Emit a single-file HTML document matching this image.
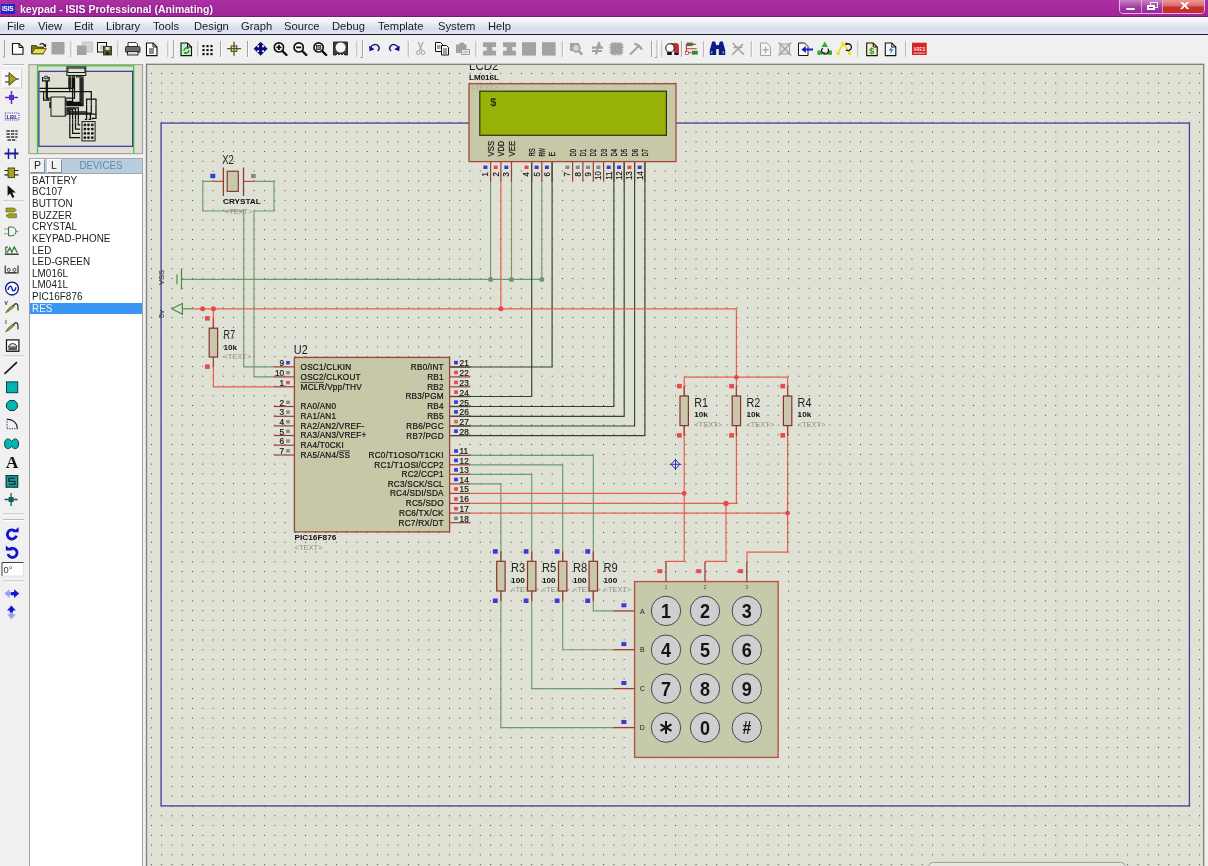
<!DOCTYPE html>
<html lang="en"><head><meta charset="utf-8"><title>keypad - ISIS Professional (Animating)</title>
<style>
html,body{margin:0;padding:0}
body{width:1208px;height:866px;overflow:hidden;position:relative;background:#f0f0f0;font-family:"Liberation Sans",sans-serif;color:#1a1a1a}
#title{position:absolute;left:0;top:0;width:1208px;height:16.4px;background:linear-gradient(#aa2fa3,#a0269a);border-bottom:1px solid #702070;box-sizing:content-box}
#title .ico{position:absolute;left:.5px;top:4px;width:14.5px;height:9.5px;background:#2424c0;color:#fff;font-size:6.5px;font-weight:bold;line-height:9.5px;text-align:center;letter-spacing:-.2px}
#title .cap{position:absolute;left:20px;top:2.5px;font-size:10px;line-height:14px;font-weight:bold;color:#fbf4fb;white-space:nowrap;transform:scaleX(1.052);transform-origin:0 0;text-shadow:0 0 2px rgba(90,10,90,.8)}
#wb{position:absolute;left:1118.5px;top:-1px;width:86px;height:14.5px;border:1px solid rgba(255,225,255,.75);border-radius:0 0 4px 4px;box-sizing:border-box;overflow:hidden;display:flex}
#wb span{display:block;height:100%;position:relative;border-right:1px solid rgba(255,225,255,.55);box-sizing:border-box}
#wb .mn{width:23px;background:linear-gradient(#c684c6,#a23aa2 55%,#9a2a9a)}
#wb .mx{width:22px;background:linear-gradient(#c684c6,#a23aa2 55%,#9a2a9a)}
#wb .cl{width:41px;background:linear-gradient(#e89a98,#dc6a68 45%,#c8302a 55%,#c23028);border-right:0}
#wb .mn i{position:absolute;left:6px;top:7.5px;width:9px;height:2.4px;background:#fff;border-radius:1px}
#wb .mx i{position:absolute;left:5.5px;top:4.6px;width:7.6px;height:5.6px;border:2px solid #fff;box-sizing:border-box;background:#6a2a78}
#wb .mx b{position:absolute;left:8.2px;top:2.2px;width:7.6px;height:5.6px;border:1.6px solid #f4e4f4;box-sizing:border-box}
#wb .cl i{position:absolute;left:16.6px;top:-1.9px;font-style:normal;font-weight:bold;font-size:13.5px;line-height:14px;color:#fff;transform:scaleX(1.25);transform-origin:0 0}
#menu{position:absolute;left:0;top:17.4px;width:1208px;height:17.1px;background:linear-gradient(#fdfbfe 0,#f0f1f9 30%,#d9dff0 62%,#d8def0 80%,#e2e7f5 100%);border-bottom:1.7px solid #181820;box-sizing:content-box}
#menu span{position:absolute;top:2.6px;font-size:10.4px;line-height:14px;color:#1c1c1c;white-space:nowrap;letter-spacing:0;transform:scaleX(1.077);transform-origin:0 0}
#hdr{position:absolute;left:28.5px;top:157.8px;width:114px;height:16.4px;background:#b9cddf;border:1px solid #a4a8ac;box-sizing:border-box;overflow:hidden}
#hdr .b{position:absolute;top:0;height:14.4px;width:15px;background:#f2f2f2;border:1px solid #fff;border-right-color:#8c8c8c;border-bottom-color:#8c8c8c;box-sizing:border-box;font-size:10.5px;line-height:11.5px;text-align:center;color:#222}
#hdr .t{position:absolute;left:30.6px;top:.3px;width:80px;text-align:center;font-size:10.3px;line-height:14px;color:#6288aa;letter-spacing:.1px;transform:scaleX(.94)}
#list{position:absolute;left:28.5px;top:174px;width:114px;height:700px;background:#fff;border:1px solid #a0a0a0;border-top:0;box-sizing:border-box;margin:0;padding:.8px 0 0 0;list-style:none}
#list li{height:11.63px;line-height:11.63px;font-size:10.4px;padding-left:2.1px;white-space:nowrap;color:#1c1c1c;letter-spacing:.05px;transform-origin:0 0}
#list li.sel{background:#3a96f4;color:#eef4ff}
#list li span{display:inline-block;transform:scaleX(.953);transform-origin:0 50%}
svg{position:absolute;left:0;top:0;will-change:transform}
#title,#menu,#hdr,#list{will-change:transform}
svg text{font-family:"Liberation Sans",sans-serif}
</style></head><body>
<div id="title"><div class="ico">ISIS</div><div class="cap">keypad - ISIS Professional (Animating)</div>
<div id="wb"><span class="mn"><i></i></span><span class="mx"><b></b><i></i></span><span class="cl"><i>x</i></span></div></div>
<div id="menu">
<span style="left:7.0px">File</span>
<span style="left:37.5px">View</span>
<span style="left:74.0px">Edit</span>
<span style="left:105.5px">Library</span>
<span style="left:153.0px">Tools</span>
<span style="left:194.0px">Design</span>
<span style="left:241.0px">Graph</span>
<span style="left:284.0px">Source</span>
<span style="left:331.5px">Debug</span>
<span style="left:377.5px">Template</span>
<span style="left:437.5px">System</span>
<span style="left:487.5px">Help</span>
</div>
<div id="hdr"><div class="b" style="left:0">P</div><div class="b" style="left:16.5px">L</div><div class="t">DEVICES</div></div>
<ul id="list">
<li><span>BATTERY</span></li>
<li><span>BC107</span></li>
<li><span>BUTTON</span></li>
<li><span>BUZZER</span></li>
<li><span>CRYSTAL</span></li>
<li><span>KEYPAD-PHONE</span></li>
<li><span>LED</span></li>
<li><span>LED-GREEN</span></li>
<li><span>LM016L</span></li>
<li><span>LM041L</span></li>
<li><span>PIC16F876</span></li>
<li class="sel"><span>RES</span></li>
</ul>
<svg width="1208" height="866" viewBox="0 0 1208 866">
<defs><pattern id="grid" x="7.022" y="4.524" width="10.277" height="9.768" patternUnits="userSpaceOnUse"><rect x="0" y="0" width="1" height="1" fill="#2c2c26" fill-opacity=".88"/></pattern>
<clipPath id="cv"><rect x="148" y="65" width="1055.5" height="801"/></clipPath></defs>
<rect x="146.5" y="64.3" width="1057.2" height="810" fill="#e0e1d5" stroke="#7e7e7a" stroke-width="1.3"/>
<g clip-path="url(#cv)">
<rect x="150" y="68" width="1052" height="798" fill="url(#grid)"/>
<rect x="162.3" y="124.3" width="1025.9" height="680.4" fill="none" stroke="#e4e4f0" stroke-width="1.2"/>
<rect x="161.1" y="123.1" width="1028.3" height="682.8" fill="none" stroke="#464692" stroke-width="1.35"/>
<rect x="928.5" y="862.4" width="197" height="12" rx="5" fill="#e6e7dc" stroke="#9c9c98" stroke-width="1"/>
<path d="M181.5,279.4 L541.8,279.4" fill="none" stroke="#6f9a6c" stroke-width="1.15"/>
<path d="M490.6,181.4 L490.6,279.4" fill="none" stroke="#6f9a6c" stroke-width="1.15"/>
<path d="M511.5,181.4 L511.5,279.4" fill="none" stroke="#6f9a6c" stroke-width="1.15"/>
<path d="M541.8,181.4 L541.8,279.4" fill="none" stroke="#6f9a6c" stroke-width="1.15"/>
<path d="M500.9,181.4 L500.9,308.8" fill="none" stroke="#e8604c" stroke-width="1.2"/>
<path d="M552.1,181.4 L552.1,367.0 L470.0,367.0" fill="none" stroke="#2c4a30" stroke-width="1.15"/>
<path d="M531.7,181.4 L531.7,396.5 L470.0,396.5" fill="none" stroke="#2c4a30" stroke-width="1.15"/>
<path d="M613.9,181.4 L613.9,406.5 L470.0,406.5" fill="none" stroke="#2c4a30" stroke-width="1.15"/>
<path d="M624.2,181.4 L624.2,416.3 L470.0,416.3" fill="none" stroke="#2c4a30" stroke-width="1.15"/>
<path d="M634.6,181.4 L634.6,426.0 L470.0,426.0" fill="none" stroke="#2c4a30" stroke-width="1.15"/>
<path d="M644.9,181.4 L644.9,435.6 L470.0,435.6" fill="none" stroke="#2c4a30" stroke-width="1.15"/>
<path d="M182.4,308.8 L192.7,308.8" fill="none" stroke="#3f8f46" stroke-width="1.15"/>
<path d="M192.7,308.8 L736.4,308.8 L736.4,377.2" fill="none" stroke="#e8604c" stroke-width="1.2"/>
<path d="M684.2,396.0 L684.2,377.2 L787.6,377.2 L787.6,396.0" fill="none" stroke="#e8604c" stroke-width="1.2"/>
<path d="M736.4,377.2 L736.4,396.0" fill="none" stroke="#e8604c" stroke-width="1.2"/>
<path d="M213.4,308.8 L213.4,328.2" fill="none" stroke="#e8604c" stroke-width="1.2"/>
<path d="M213.4,357.0 L213.4,386.8 L273.8,386.8" fill="none" stroke="#e8604c" stroke-width="1.2"/>
<path d="M212.8,181.4 L202.8,181.4 L202.8,211.0 L243.7,211.0 L243.7,366.9 L273.8,366.9" fill="none" stroke="#6f9a6c" stroke-width="1.15"/>
<path d="M254.3,181.4 L274.0,181.4 L274.0,211.0 L254.0,211.0 L254.0,376.9 L273.8,376.9" fill="none" stroke="#6f9a6c" stroke-width="1.15"/>
<path d="M470.0,455.4 L593.3,455.4 L593.3,561.3" fill="none" stroke="#6f9a6c" stroke-width="1.15"/>
<path d="M593.3,591.0 L593.3,610.9 L613.5,610.9" fill="none" stroke="#6f9a6c" stroke-width="1.15"/>
<path d="M470.0,464.8 L562.7,464.8 L562.7,561.3" fill="none" stroke="#6f9a6c" stroke-width="1.15"/>
<path d="M562.7,591.0 L562.7,649.7 L613.5,649.7" fill="none" stroke="#6f9a6c" stroke-width="1.15"/>
<path d="M470.0,474.3 L531.7,474.3 L531.7,561.3" fill="none" stroke="#6f9a6c" stroke-width="1.15"/>
<path d="M531.7,591.0 L531.7,688.6 L613.5,688.6" fill="none" stroke="#6f9a6c" stroke-width="1.15"/>
<path d="M470.0,483.9 L500.9,483.9 L500.9,561.3" fill="none" stroke="#6f9a6c" stroke-width="1.15"/>
<path d="M500.9,591.0 L500.9,727.6 L613.5,727.6" fill="none" stroke="#6f9a6c" stroke-width="1.15"/>
<path d="M470.0,493.4 L684.2,493.4" fill="none" stroke="#e8604c" stroke-width="1.2"/>
<path d="M470.0,503.4 L736.4,503.4 L736.4,425.6" fill="none" stroke="#e8604c" stroke-width="1.2"/>
<path d="M470.0,513.1 L787.6,513.1" fill="none" stroke="#e8604c" stroke-width="1.2"/>
<path d="M684.2,425.6 L684.2,561.4 L666.2,561.4" fill="none" stroke="#e8604c" stroke-width="1.2"/>
<path d="M726.0,503.4 L726.0,561.4 L705.2,561.4" fill="none" stroke="#e8604c" stroke-width="1.2"/>
<path d="M787.6,425.6 L787.6,552.2 L747.0,552.2 L747.0,561.4" fill="none" stroke="#e8604c" stroke-width="1.2"/>
<text x="469.0" y="69.8" font-size="12.5" fill="#222" text-anchor="start" font-weight="normal" letter-spacing="0"  textLength="29.5" lengthAdjust="spacingAndGlyphs">LCD2</text>
<text x="469.0" y="80.4" font-size="7.2" fill="#111" text-anchor="start" font-weight="bold" letter-spacing="0"  textLength="30.0" lengthAdjust="spacingAndGlyphs">LM016L</text>
<rect x="469" y="83.7" width="207" height="77.9" fill="#c6c8a8" stroke="#a8463c" stroke-width="1.3"/>
<text x="470.5" y="89.6" font-size="7.5" fill="#a9aa98" text-anchor="start" font-weight="normal" letter-spacing="0" >&lt;TEXT&gt;</text>
<rect x="479.8" y="91.2" width="186.6" height="44.1" fill="#99b209" stroke="#2c3208" stroke-width="1.2"/>
<text x="490.3" y="105.8" font-size="11" fill="#2a3010" text-anchor="start" font-weight="bold" letter-spacing="0" >$</text>
<text transform="translate(494.1,156.5) rotate(-90)" font-size="9.8" fill="#1a1a1a" stroke="#1a1a1a" stroke-width=".25" textLength="15.6" lengthAdjust="spacingAndGlyphs">VSS</text>
<path d="M490.6,161.6V181.4" stroke="#96403a" stroke-width="1.2"/>
<rect x="483.4" y="165.6" width="4.0" height="3.4" fill="#3a3ad8"/>
<text transform="translate(488.3,176.4) rotate(-90)" font-size="9.2" fill="#151515" stroke="#151515" stroke-width=".2" textLength="4.3" lengthAdjust="spacingAndGlyphs">1</text>
<text transform="translate(504.4,156.5) rotate(-90)" font-size="9.8" fill="#1a1a1a" stroke="#1a1a1a" stroke-width=".25" textLength="15.6" lengthAdjust="spacingAndGlyphs">VDD</text>
<path d="M500.9,161.6V181.4" stroke="#96403a" stroke-width="1.2"/>
<rect x="493.7" y="165.6" width="4.0" height="3.4" fill="#e84a50"/>
<text transform="translate(498.6,176.4) rotate(-90)" font-size="9.2" fill="#151515" stroke="#151515" stroke-width=".2" textLength="4.3" lengthAdjust="spacingAndGlyphs">2</text>
<text transform="translate(515.0,156.5) rotate(-90)" font-size="9.8" fill="#1a1a1a" stroke="#1a1a1a" stroke-width=".25" textLength="15.6" lengthAdjust="spacingAndGlyphs">VEE</text>
<path d="M511.5,161.6V181.4" stroke="#96403a" stroke-width="1.2"/>
<rect x="504.3" y="165.6" width="4.0" height="3.4" fill="#3a3ad8"/>
<text transform="translate(509.2,176.4) rotate(-90)" font-size="9.2" fill="#151515" stroke="#151515" stroke-width=".2" textLength="4.3" lengthAdjust="spacingAndGlyphs">3</text>
<text transform="translate(534.9,156.5) rotate(-90)" font-size="9" fill="#1a1a1a" stroke="#1a1a1a" stroke-width=".25" textLength="8.4" lengthAdjust="spacingAndGlyphs">RS</text>
<path d="M531.7,161.6V181.4" stroke="#96403a" stroke-width="1.2"/>
<rect x="524.5" y="165.6" width="4.0" height="3.4" fill="#e84a50"/>
<text transform="translate(529.4,176.4) rotate(-90)" font-size="9.2" fill="#151515" stroke="#151515" stroke-width=".2" textLength="4.3" lengthAdjust="spacingAndGlyphs">4</text>
<text transform="translate(545.0,156.5) rotate(-90)" font-size="9" fill="#1a1a1a" stroke="#1a1a1a" stroke-width=".25" textLength="8.4" lengthAdjust="spacingAndGlyphs">RW</text>
<path d="M541.8,161.6V181.4" stroke="#96403a" stroke-width="1.2"/>
<rect x="534.6" y="165.6" width="4.0" height="3.4" fill="#3a3ad8"/>
<text transform="translate(539.5,176.4) rotate(-90)" font-size="9.2" fill="#151515" stroke="#151515" stroke-width=".2" textLength="4.3" lengthAdjust="spacingAndGlyphs">5</text>
<text transform="translate(555.3,156.5) rotate(-90)" font-size="9" fill="#1a1a1a" stroke="#1a1a1a" stroke-width=".25" textLength="4.6" lengthAdjust="spacingAndGlyphs">E</text>
<path d="M552.1,161.6V181.4" stroke="#96403a" stroke-width="1.2"/>
<rect x="544.9" y="165.6" width="4.0" height="3.4" fill="#3a3ad8"/>
<text transform="translate(549.8,176.4) rotate(-90)" font-size="9.2" fill="#151515" stroke="#151515" stroke-width=".2" textLength="4.3" lengthAdjust="spacingAndGlyphs">6</text>
<text transform="translate(575.8,156.5) rotate(-90)" font-size="8.8" fill="#1a1a1a" stroke="#1a1a1a" stroke-width=".25" textLength="7.6" lengthAdjust="spacingAndGlyphs">D0</text>
<path d="M572.6,161.6V181.4" stroke="#96403a" stroke-width="1.2"/>
<rect x="565.4" y="165.6" width="4.0" height="3.4" fill="#8a8a84"/>
<text transform="translate(570.3,176.4) rotate(-90)" font-size="9.2" fill="#151515" stroke="#151515" stroke-width=".2" textLength="4.3" lengthAdjust="spacingAndGlyphs">7</text>
<text transform="translate(586.1,156.5) rotate(-90)" font-size="8.8" fill="#1a1a1a" stroke="#1a1a1a" stroke-width=".25" textLength="7.6" lengthAdjust="spacingAndGlyphs">D1</text>
<path d="M582.9,161.6V181.4" stroke="#96403a" stroke-width="1.2"/>
<rect x="575.7" y="165.6" width="4.0" height="3.4" fill="#8a8a84"/>
<text transform="translate(580.6,176.4) rotate(-90)" font-size="9.2" fill="#151515" stroke="#151515" stroke-width=".2" textLength="4.3" lengthAdjust="spacingAndGlyphs">8</text>
<text transform="translate(596.4,156.5) rotate(-90)" font-size="8.8" fill="#1a1a1a" stroke="#1a1a1a" stroke-width=".25" textLength="7.6" lengthAdjust="spacingAndGlyphs">D2</text>
<path d="M593.3,161.6V181.4" stroke="#96403a" stroke-width="1.2"/>
<rect x="586.1" y="165.6" width="4.0" height="3.4" fill="#8a8a84"/>
<text transform="translate(591.0,176.4) rotate(-90)" font-size="9.2" fill="#151515" stroke="#151515" stroke-width=".2" textLength="4.3" lengthAdjust="spacingAndGlyphs">9</text>
<text transform="translate(606.8,156.5) rotate(-90)" font-size="8.8" fill="#1a1a1a" stroke="#1a1a1a" stroke-width=".25" textLength="7.6" lengthAdjust="spacingAndGlyphs">D3</text>
<path d="M603.6,161.6V181.4" stroke="#96403a" stroke-width="1.2"/>
<rect x="596.4" y="165.6" width="4.0" height="3.4" fill="#8a8a84"/>
<text transform="translate(601.3,179.8) rotate(-90)" font-size="9.2" fill="#151515" stroke="#151515" stroke-width=".2" textLength="8.4" lengthAdjust="spacingAndGlyphs">10</text>
<text transform="translate(617.1,156.5) rotate(-90)" font-size="8.8" fill="#1a1a1a" stroke="#1a1a1a" stroke-width=".25" textLength="7.6" lengthAdjust="spacingAndGlyphs">D4</text>
<path d="M613.9,161.6V181.4" stroke="#96403a" stroke-width="1.2"/>
<rect x="606.7" y="165.6" width="4.0" height="3.4" fill="#3a3ad8"/>
<text transform="translate(611.6,179.8) rotate(-90)" font-size="9.2" fill="#151515" stroke="#151515" stroke-width=".2" textLength="8.4" lengthAdjust="spacingAndGlyphs">11</text>
<text transform="translate(627.4,156.5) rotate(-90)" font-size="8.8" fill="#1a1a1a" stroke="#1a1a1a" stroke-width=".25" textLength="7.6" lengthAdjust="spacingAndGlyphs">D5</text>
<path d="M624.2,161.6V181.4" stroke="#96403a" stroke-width="1.2"/>
<rect x="617.0" y="165.6" width="4.0" height="3.4" fill="#3a3ad8"/>
<text transform="translate(622.0,179.8) rotate(-90)" font-size="9.2" fill="#151515" stroke="#151515" stroke-width=".2" textLength="8.4" lengthAdjust="spacingAndGlyphs">12</text>
<text transform="translate(637.7,156.5) rotate(-90)" font-size="8.8" fill="#1a1a1a" stroke="#1a1a1a" stroke-width=".25" textLength="7.6" lengthAdjust="spacingAndGlyphs">D6</text>
<path d="M634.6,161.6V181.4" stroke="#96403a" stroke-width="1.2"/>
<rect x="627.4" y="165.6" width="4.0" height="3.4" fill="#e84a50"/>
<text transform="translate(632.3,179.8) rotate(-90)" font-size="9.2" fill="#151515" stroke="#151515" stroke-width=".2" textLength="8.4" lengthAdjust="spacingAndGlyphs">13</text>
<text transform="translate(648.1,156.5) rotate(-90)" font-size="8.8" fill="#1a1a1a" stroke="#1a1a1a" stroke-width=".25" textLength="7.6" lengthAdjust="spacingAndGlyphs">D7</text>
<path d="M644.9,161.6V181.4" stroke="#96403a" stroke-width="1.2"/>
<rect x="637.7" y="165.6" width="4.0" height="3.4" fill="#3a3ad8"/>
<text transform="translate(642.6,179.8) rotate(-90)" font-size="9.2" fill="#151515" stroke="#151515" stroke-width=".2" textLength="8.4" lengthAdjust="spacingAndGlyphs">14</text>
<path d="M181.5,269V289.6M177,274.6V284.2" stroke="#4a8a4e" stroke-width="1.2" fill="none"/>
<path d="M171.9,308.8L182.4,303.4V314.2Z" stroke="#3f8f46" stroke-width="1.2" fill="none"/>
<text transform="translate(163.9,285) rotate(-90)" font-size="7.5" fill="#222">VSS</text>
<text transform="translate(163.9,318) rotate(-90)" font-size="7.5" fill="#222">5v</text>
<circle cx="202.6" cy="308.8" r="2.5" fill="#e8484a"/>
<circle cx="213.4" cy="308.8" r="2.5" fill="#e8484a"/>
<circle cx="500.9" cy="308.8" r="2.5" fill="#e8484a"/>
<circle cx="490.6" cy="279.4" r="2.5" fill="#6e976a"/>
<circle cx="511.5" cy="279.4" r="2.5" fill="#6e976a"/>
<circle cx="541.8" cy="279.4" r="2.5" fill="#6e976a"/>
<circle cx="736.4" cy="377.2" r="2.3" fill="#e8484a"/>
<circle cx="684.2" cy="493.4" r="2.4" fill="#e8484a"/>
<circle cx="726.0" cy="503.4" r="2.6" fill="#e8484a"/>
<circle cx="787.6" cy="513.1" r="2.4" fill="#e8484a"/>
<path d="M213.4,318.4V328.2M213.4,357.0V366.8" stroke="#a83c36" stroke-width="1.25"/>
<rect x="209.2" y="328.2" width="8.4" height="28.8" fill="#cbc7ac" stroke="#84362e" stroke-width="1.2"/>
<rect x="205.0" y="316.1" width="4.8" height="4.5" fill="#e84a50"/>
<rect x="205.0" y="364.4" width="4.8" height="4.5" fill="#e84a50"/>
<text x="223.4" y="338.9" font-size="12" fill="#222" text-anchor="start" font-weight="normal" letter-spacing="0"  textLength="11.6" lengthAdjust="spacingAndGlyphs">R7</text>
<text x="223.4" y="349.5" font-size="7.8" fill="#151515" text-anchor="start" font-weight="bold" letter-spacing="0"  textLength="13.7" lengthAdjust="spacingAndGlyphs">10k</text>
<text x="223.4" y="358.8" font-size="7.5" fill="#8f9088" text-anchor="start" font-weight="normal" letter-spacing="0" >&lt;TEXT&gt;</text>
<path d="M684.2,386.2V396.0M684.2,425.6V435.4" stroke="#a83c36" stroke-width="1.25"/>
<rect x="680.0" y="396.0" width="8.4" height="29.6" fill="#cbc7ac" stroke="#84362e" stroke-width="1.2"/>
<rect x="677.0" y="383.9" width="4.8" height="4.5" fill="#e84a50"/>
<rect x="677.0" y="433.1" width="4.8" height="4.5" fill="#e84a50"/>
<text x="694.2" y="406.7" font-size="12" fill="#222" text-anchor="start" font-weight="normal" letter-spacing="0"  textLength="13.8" lengthAdjust="spacingAndGlyphs">R1</text>
<text x="694.2" y="417.3" font-size="7.8" fill="#151515" text-anchor="start" font-weight="bold" letter-spacing="0"  textLength="13.7" lengthAdjust="spacingAndGlyphs">10k</text>
<text x="694.2" y="426.6" font-size="7.5" fill="#8f9088" text-anchor="start" font-weight="normal" letter-spacing="0" >&lt;TEXT&gt;</text>
<path d="M736.4,386.2V396.0M736.4,425.6V435.4" stroke="#a83c36" stroke-width="1.25"/>
<rect x="732.2" y="396.0" width="8.4" height="29.6" fill="#cbc7ac" stroke="#84362e" stroke-width="1.2"/>
<rect x="729.2" y="383.9" width="4.8" height="4.5" fill="#e84a50"/>
<rect x="729.2" y="433.1" width="4.8" height="4.5" fill="#e84a50"/>
<text x="746.4" y="406.7" font-size="12" fill="#222" text-anchor="start" font-weight="normal" letter-spacing="0"  textLength="13.8" lengthAdjust="spacingAndGlyphs">R2</text>
<text x="746.4" y="417.3" font-size="7.8" fill="#151515" text-anchor="start" font-weight="bold" letter-spacing="0"  textLength="13.7" lengthAdjust="spacingAndGlyphs">10k</text>
<text x="746.4" y="426.6" font-size="7.5" fill="#8f9088" text-anchor="start" font-weight="normal" letter-spacing="0" >&lt;TEXT&gt;</text>
<path d="M787.6,386.2V396.0M787.6,425.6V435.4" stroke="#a83c36" stroke-width="1.25"/>
<rect x="783.4" y="396.0" width="8.4" height="29.6" fill="#cbc7ac" stroke="#84362e" stroke-width="1.2"/>
<rect x="780.4" y="383.9" width="4.8" height="4.5" fill="#e84a50"/>
<rect x="780.4" y="433.1" width="4.8" height="4.5" fill="#e84a50"/>
<text x="797.6" y="406.7" font-size="12" fill="#222" text-anchor="start" font-weight="normal" letter-spacing="0"  textLength="13.8" lengthAdjust="spacingAndGlyphs">R4</text>
<text x="797.6" y="417.3" font-size="7.8" fill="#151515" text-anchor="start" font-weight="bold" letter-spacing="0"  textLength="13.7" lengthAdjust="spacingAndGlyphs">10k</text>
<text x="797.6" y="426.6" font-size="7.5" fill="#8f9088" text-anchor="start" font-weight="normal" letter-spacing="0" >&lt;TEXT&gt;</text>
<path d="M500.9,551.5V561.3M500.9,591.0V600.8" stroke="#a83c36" stroke-width="1.25"/>
<rect x="496.7" y="561.3" width="8.4" height="29.7" fill="#cbc7ac" stroke="#84362e" stroke-width="1.2"/>
<rect x="492.9" y="549.2" width="4.8" height="4.5" fill="#3a3ad8"/>
<rect x="492.9" y="598.5" width="4.8" height="4.5" fill="#3a3ad8"/>
<text x="511.1" y="572.0" font-size="12" fill="#222" text-anchor="start" font-weight="normal" letter-spacing="0"  textLength="14.2" lengthAdjust="spacingAndGlyphs">R3</text>
<text x="511.1" y="582.6" font-size="7.8" fill="#151515" text-anchor="start" font-weight="bold" letter-spacing="0"  textLength="13.7" lengthAdjust="spacingAndGlyphs">100</text>
<text x="511.1" y="591.9" font-size="7.5" fill="#8f9088" text-anchor="start" font-weight="normal" letter-spacing="0" >&lt;TEXT&gt;</text>
<path d="M531.7,551.5V561.3M531.7,591.0V600.8" stroke="#a83c36" stroke-width="1.25"/>
<rect x="527.5" y="561.3" width="8.4" height="29.7" fill="#cbc7ac" stroke="#84362e" stroke-width="1.2"/>
<rect x="523.7" y="549.2" width="4.8" height="4.5" fill="#3a3ad8"/>
<rect x="523.7" y="598.5" width="4.8" height="4.5" fill="#3a3ad8"/>
<text x="541.9" y="572.0" font-size="12" fill="#222" text-anchor="start" font-weight="normal" letter-spacing="0"  textLength="14.2" lengthAdjust="spacingAndGlyphs">R5</text>
<text x="541.9" y="582.6" font-size="7.8" fill="#151515" text-anchor="start" font-weight="bold" letter-spacing="0"  textLength="13.7" lengthAdjust="spacingAndGlyphs">100</text>
<text x="541.9" y="591.9" font-size="7.5" fill="#8f9088" text-anchor="start" font-weight="normal" letter-spacing="0" >&lt;TEXT&gt;</text>
<path d="M562.7,551.5V561.3M562.7,591.0V600.8" stroke="#a83c36" stroke-width="1.25"/>
<rect x="558.5" y="561.3" width="8.4" height="29.7" fill="#cbc7ac" stroke="#84362e" stroke-width="1.2"/>
<rect x="554.7" y="549.2" width="4.8" height="4.5" fill="#3a3ad8"/>
<rect x="554.7" y="598.5" width="4.8" height="4.5" fill="#3a3ad8"/>
<text x="572.9" y="572.0" font-size="12" fill="#222" text-anchor="start" font-weight="normal" letter-spacing="0"  textLength="14.2" lengthAdjust="spacingAndGlyphs">R8</text>
<text x="572.9" y="582.6" font-size="7.8" fill="#151515" text-anchor="start" font-weight="bold" letter-spacing="0"  textLength="13.7" lengthAdjust="spacingAndGlyphs">100</text>
<text x="572.9" y="591.9" font-size="7.5" fill="#8f9088" text-anchor="start" font-weight="normal" letter-spacing="0" >&lt;TEXT&gt;</text>
<path d="M593.3,551.5V561.3M593.3,591.0V600.8" stroke="#a83c36" stroke-width="1.25"/>
<rect x="589.1" y="561.3" width="8.4" height="29.7" fill="#cbc7ac" stroke="#84362e" stroke-width="1.2"/>
<rect x="585.3" y="549.2" width="4.8" height="4.5" fill="#3a3ad8"/>
<rect x="585.3" y="598.5" width="4.8" height="4.5" fill="#3a3ad8"/>
<text x="603.5" y="572.0" font-size="12" fill="#222" text-anchor="start" font-weight="normal" letter-spacing="0"  textLength="14.2" lengthAdjust="spacingAndGlyphs">R9</text>
<text x="603.5" y="582.6" font-size="7.8" fill="#151515" text-anchor="start" font-weight="bold" letter-spacing="0"  textLength="13.7" lengthAdjust="spacingAndGlyphs">100</text>
<text x="603.5" y="591.9" font-size="7.5" fill="#8f9088" text-anchor="start" font-weight="normal" letter-spacing="0" >&lt;TEXT&gt;</text>
<path d="M212.8,181.4H223.4M243.5,181.4H254.3" stroke="#b05048" stroke-width="1.2"/>
<path d="M223.4,167.4V196M243.5,167.4V196" stroke="#8c3a34" stroke-width="1.3"/>
<rect x="227.2" y="171.3" width="11.1" height="20.1" fill="#c9c9ad" stroke="#8c3a34" stroke-width="1.2"/>
<rect x="210.3" y="173.8" width="5.0" height="4.4" fill="#3a3ad8"/>
<rect x="251.1" y="173.9" width="4.6" height="4.2" fill="#8a8a84"/>
<text x="222.2" y="163.9" font-size="12.3" fill="#222" text-anchor="start" font-weight="normal" letter-spacing="0"  textLength="11.8" lengthAdjust="spacingAndGlyphs">X2</text>
<text x="223.0" y="203.8" font-size="6.8" fill="#111" text-anchor="start" font-weight="bold" letter-spacing="0"  textLength="37.7" lengthAdjust="spacingAndGlyphs">CRYSTAL</text>
<text x="224.6" y="214.3" font-size="7.5" fill="#8f9088" text-anchor="start" font-weight="normal" letter-spacing="0" >&lt;TEXT&gt;</text>
<text x="293.8" y="353.8" font-size="12.2" fill="#222" text-anchor="start" font-weight="normal" letter-spacing="0"  textLength="14.0" lengthAdjust="spacingAndGlyphs">U2</text>
<rect x="294.4" y="357.4" width="155.2" height="174.5" fill="#c6c8a8" stroke="#9a443c" stroke-width="1.3"/>
<path d="M273.8,366.9H294.4" stroke="#96403a" stroke-width="1.2"/>
<text x="284.2" y="365.9" font-size="8.3" fill="#151515" text-anchor="end" font-weight="normal" letter-spacing="0" stroke="#151515" stroke-width=".2">9</text>
<rect x="286.2" y="361.0" width="3.6" height="3.4" fill="#3a3ad8"/>
<text x="300.6" y="369.8" font-size="8.2" fill="#151515" text-anchor="start" font-weight="normal" letter-spacing="0.22" stroke="#151515" stroke-width=".22">OSC1/CLKIN</text>
<path d="M273.8,376.9H294.4" stroke="#96403a" stroke-width="1.2"/>
<text x="284.2" y="375.9" font-size="8.3" fill="#151515" text-anchor="end" font-weight="normal" letter-spacing="0" stroke="#151515" stroke-width=".2">10</text>
<rect x="286.2" y="371.0" width="3.6" height="3.4" fill="#8a8a84"/>
<text x="300.6" y="379.8" font-size="8.2" fill="#151515" text-anchor="start" font-weight="normal" letter-spacing="0.22" stroke="#151515" stroke-width=".22">OSC2/CLKOUT</text>
<path d="M273.8,386.8H294.4" stroke="#96403a" stroke-width="1.2"/>
<text x="284.2" y="385.8" font-size="8.3" fill="#151515" text-anchor="end" font-weight="normal" letter-spacing="0" stroke="#151515" stroke-width=".2">1</text>
<rect x="286.2" y="380.9" width="3.6" height="3.4" fill="#e84a50"/>
<text x="300.6" y="389.7" font-size="8.2" fill="#151515" text-anchor="start" font-weight="normal" letter-spacing="0.22" stroke="#151515" stroke-width=".22">MCLR/Vpp/THV</text>
<path d="M273.8,406.5H294.4" stroke="#96403a" stroke-width="1.2"/>
<text x="284.2" y="405.5" font-size="8.3" fill="#151515" text-anchor="end" font-weight="normal" letter-spacing="0" stroke="#151515" stroke-width=".2">2</text>
<rect x="286.2" y="400.6" width="3.6" height="3.4" fill="#8a8a84"/>
<text x="300.6" y="409.4" font-size="8.2" fill="#151515" text-anchor="start" font-weight="normal" letter-spacing="0.22" stroke="#151515" stroke-width=".22">RA0/AN0</text>
<path d="M273.8,416.3H294.4" stroke="#96403a" stroke-width="1.2"/>
<text x="284.2" y="415.3" font-size="8.3" fill="#151515" text-anchor="end" font-weight="normal" letter-spacing="0" stroke="#151515" stroke-width=".2">3</text>
<rect x="286.2" y="410.4" width="3.6" height="3.4" fill="#8a8a84"/>
<text x="300.6" y="419.2" font-size="8.2" fill="#151515" text-anchor="start" font-weight="normal" letter-spacing="0.22" stroke="#151515" stroke-width=".22">RA1/AN1</text>
<path d="M273.8,425.9H294.4" stroke="#96403a" stroke-width="1.2"/>
<text x="284.2" y="424.9" font-size="8.3" fill="#151515" text-anchor="end" font-weight="normal" letter-spacing="0" stroke="#151515" stroke-width=".2">4</text>
<rect x="286.2" y="420.0" width="3.6" height="3.4" fill="#8a8a84"/>
<text x="300.6" y="428.8" font-size="8.2" fill="#151515" text-anchor="start" font-weight="normal" letter-spacing="0.22" stroke="#151515" stroke-width=".22">RA2/AN2/VREF-</text>
<path d="M273.8,435.5H294.4" stroke="#96403a" stroke-width="1.2"/>
<text x="284.2" y="434.5" font-size="8.3" fill="#151515" text-anchor="end" font-weight="normal" letter-spacing="0" stroke="#151515" stroke-width=".2">5</text>
<rect x="286.2" y="429.6" width="3.6" height="3.4" fill="#8a8a84"/>
<text x="300.6" y="438.4" font-size="8.2" fill="#151515" text-anchor="start" font-weight="normal" letter-spacing="0.22" stroke="#151515" stroke-width=".22">RA3/AN3/VREF+</text>
<path d="M273.8,445.2H294.4" stroke="#96403a" stroke-width="1.2"/>
<text x="284.2" y="444.2" font-size="8.3" fill="#151515" text-anchor="end" font-weight="normal" letter-spacing="0" stroke="#151515" stroke-width=".2">6</text>
<rect x="286.2" y="439.3" width="3.6" height="3.4" fill="#8a8a84"/>
<text x="300.6" y="448.1" font-size="8.2" fill="#151515" text-anchor="start" font-weight="normal" letter-spacing="0.22" stroke="#151515" stroke-width=".22">RA4/T0CKI</text>
<path d="M273.8,455.0H294.4" stroke="#96403a" stroke-width="1.2"/>
<text x="284.2" y="454.0" font-size="8.3" fill="#151515" text-anchor="end" font-weight="normal" letter-spacing="0" stroke="#151515" stroke-width=".2">7</text>
<rect x="286.2" y="449.1" width="3.6" height="3.4" fill="#8a8a84"/>
<text x="300.6" y="457.9" font-size="8.2" fill="#151515" text-anchor="start" font-weight="normal" letter-spacing="0.22" stroke="#151515" stroke-width=".22">RA5/AN4/SS</text>
<path d="M300.6,382.4H323.8M338.9,450.8H350" stroke="#222" stroke-width=".7"/>
<path d="M449.6,367.0H470" stroke="#96403a" stroke-width="1.2"/>
<text x="459.6" y="366.0" font-size="8.3" fill="#151515" text-anchor="start" font-weight="normal" letter-spacing="0" stroke="#151515" stroke-width=".2">21</text>
<rect x="454.1" y="360.8" width="3.8" height="3.6" fill="#3a3ad8"/>
<text x="443.8" y="369.9" font-size="8.2" fill="#151515" text-anchor="end" font-weight="normal" letter-spacing="0.22" stroke="#151515" stroke-width=".22">RB0/INT</text>
<path d="M449.6,376.9H470" stroke="#96403a" stroke-width="1.2"/>
<text x="459.6" y="375.9" font-size="8.3" fill="#151515" text-anchor="start" font-weight="normal" letter-spacing="0" stroke="#151515" stroke-width=".2">22</text>
<rect x="454.1" y="370.7" width="3.8" height="3.6" fill="#e84a50"/>
<text x="443.8" y="379.8" font-size="8.2" fill="#151515" text-anchor="end" font-weight="normal" letter-spacing="0.22" stroke="#151515" stroke-width=".22">RB1</text>
<path d="M449.6,386.8H470" stroke="#96403a" stroke-width="1.2"/>
<text x="459.6" y="385.8" font-size="8.3" fill="#151515" text-anchor="start" font-weight="normal" letter-spacing="0" stroke="#151515" stroke-width=".2">23</text>
<rect x="454.1" y="380.6" width="3.8" height="3.6" fill="#e84a50"/>
<text x="443.8" y="389.7" font-size="8.2" fill="#151515" text-anchor="end" font-weight="normal" letter-spacing="0.22" stroke="#151515" stroke-width=".22">RB2</text>
<path d="M449.6,396.5H470" stroke="#96403a" stroke-width="1.2"/>
<text x="459.6" y="395.5" font-size="8.3" fill="#151515" text-anchor="start" font-weight="normal" letter-spacing="0" stroke="#151515" stroke-width=".2">24</text>
<rect x="454.1" y="390.3" width="3.8" height="3.6" fill="#e84a50"/>
<text x="443.8" y="399.4" font-size="8.2" fill="#151515" text-anchor="end" font-weight="normal" letter-spacing="0.22" stroke="#151515" stroke-width=".22">RB3/PGM</text>
<path d="M449.6,406.5H470" stroke="#96403a" stroke-width="1.2"/>
<text x="459.6" y="405.5" font-size="8.3" fill="#151515" text-anchor="start" font-weight="normal" letter-spacing="0" stroke="#151515" stroke-width=".2">25</text>
<rect x="454.1" y="400.3" width="3.8" height="3.6" fill="#3a3ad8"/>
<text x="443.8" y="409.4" font-size="8.2" fill="#151515" text-anchor="end" font-weight="normal" letter-spacing="0.22" stroke="#151515" stroke-width=".22">RB4</text>
<path d="M449.6,416.3H470" stroke="#96403a" stroke-width="1.2"/>
<text x="459.6" y="415.3" font-size="8.3" fill="#151515" text-anchor="start" font-weight="normal" letter-spacing="0" stroke="#151515" stroke-width=".2">26</text>
<rect x="454.1" y="410.1" width="3.8" height="3.6" fill="#3a3ad8"/>
<text x="443.8" y="419.2" font-size="8.2" fill="#151515" text-anchor="end" font-weight="normal" letter-spacing="0.22" stroke="#151515" stroke-width=".22">RB5</text>
<path d="M449.6,426.0H470" stroke="#96403a" stroke-width="1.2"/>
<text x="459.6" y="425.0" font-size="8.3" fill="#151515" text-anchor="start" font-weight="normal" letter-spacing="0" stroke="#151515" stroke-width=".2">27</text>
<rect x="454.1" y="419.8" width="3.8" height="3.6" fill="#d0705c"/>
<text x="443.8" y="428.9" font-size="8.2" fill="#151515" text-anchor="end" font-weight="normal" letter-spacing="0.22" stroke="#151515" stroke-width=".22">RB6/PGC</text>
<path d="M449.6,435.6H470" stroke="#96403a" stroke-width="1.2"/>
<text x="459.6" y="434.6" font-size="8.3" fill="#151515" text-anchor="start" font-weight="normal" letter-spacing="0" stroke="#151515" stroke-width=".2">28</text>
<rect x="454.1" y="429.4" width="3.8" height="3.6" fill="#3a3ad8"/>
<text x="443.8" y="438.5" font-size="8.2" fill="#151515" text-anchor="end" font-weight="normal" letter-spacing="0.22" stroke="#151515" stroke-width=".22">RB7/PGD</text>
<path d="M449.6,455.4H470" stroke="#96403a" stroke-width="1.2"/>
<text x="459.6" y="454.4" font-size="8.3" fill="#151515" text-anchor="start" font-weight="normal" letter-spacing="0" stroke="#151515" stroke-width=".2">11</text>
<rect x="454.1" y="449.2" width="3.8" height="3.6" fill="#3a3ad8"/>
<text x="443.8" y="458.3" font-size="8.2" fill="#151515" text-anchor="end" font-weight="normal" letter-spacing="0.22" stroke="#151515" stroke-width=".22">RC0/T1OSO/T1CKI</text>
<path d="M449.6,464.8H470" stroke="#96403a" stroke-width="1.2"/>
<text x="459.6" y="463.8" font-size="8.3" fill="#151515" text-anchor="start" font-weight="normal" letter-spacing="0" stroke="#151515" stroke-width=".2">12</text>
<rect x="454.1" y="458.6" width="3.8" height="3.6" fill="#3a3ad8"/>
<text x="443.8" y="467.7" font-size="8.2" fill="#151515" text-anchor="end" font-weight="normal" letter-spacing="0.22" stroke="#151515" stroke-width=".22">RC1/T1OSI/CCP2</text>
<path d="M449.6,474.3H470" stroke="#96403a" stroke-width="1.2"/>
<text x="459.6" y="473.3" font-size="8.3" fill="#151515" text-anchor="start" font-weight="normal" letter-spacing="0" stroke="#151515" stroke-width=".2">13</text>
<rect x="454.1" y="468.1" width="3.8" height="3.6" fill="#3a3ad8"/>
<text x="443.8" y="477.2" font-size="8.2" fill="#151515" text-anchor="end" font-weight="normal" letter-spacing="0.22" stroke="#151515" stroke-width=".22">RC2/CCP1</text>
<path d="M449.6,483.9H470" stroke="#96403a" stroke-width="1.2"/>
<text x="459.6" y="482.9" font-size="8.3" fill="#151515" text-anchor="start" font-weight="normal" letter-spacing="0" stroke="#151515" stroke-width=".2">14</text>
<rect x="454.1" y="477.7" width="3.8" height="3.6" fill="#3a3ad8"/>
<text x="443.8" y="486.8" font-size="8.2" fill="#151515" text-anchor="end" font-weight="normal" letter-spacing="0.22" stroke="#151515" stroke-width=".22">RC3/SCK/SCL</text>
<path d="M449.6,493.4H470" stroke="#96403a" stroke-width="1.2"/>
<text x="459.6" y="492.4" font-size="8.3" fill="#151515" text-anchor="start" font-weight="normal" letter-spacing="0" stroke="#151515" stroke-width=".2">15</text>
<rect x="454.1" y="487.2" width="3.8" height="3.6" fill="#e84a50"/>
<text x="443.8" y="496.3" font-size="8.2" fill="#151515" text-anchor="end" font-weight="normal" letter-spacing="0.22" stroke="#151515" stroke-width=".22">RC4/SDI/SDA</text>
<path d="M449.6,503.4H470" stroke="#96403a" stroke-width="1.2"/>
<text x="459.6" y="502.4" font-size="8.3" fill="#151515" text-anchor="start" font-weight="normal" letter-spacing="0" stroke="#151515" stroke-width=".2">16</text>
<rect x="454.1" y="497.2" width="3.8" height="3.6" fill="#e84a50"/>
<text x="443.8" y="506.3" font-size="8.2" fill="#151515" text-anchor="end" font-weight="normal" letter-spacing="0.22" stroke="#151515" stroke-width=".22">RC5/SDO</text>
<path d="M449.6,513.1H470" stroke="#96403a" stroke-width="1.2"/>
<text x="459.6" y="512.1" font-size="8.3" fill="#151515" text-anchor="start" font-weight="normal" letter-spacing="0" stroke="#151515" stroke-width=".2">17</text>
<rect x="454.1" y="506.9" width="3.8" height="3.6" fill="#e84a50"/>
<text x="443.8" y="516.0" font-size="8.2" fill="#151515" text-anchor="end" font-weight="normal" letter-spacing="0.22" stroke="#151515" stroke-width=".22">RC6/TX/CK</text>
<path d="M449.6,522.7H470" stroke="#96403a" stroke-width="1.2"/>
<text x="459.6" y="521.7" font-size="8.3" fill="#151515" text-anchor="start" font-weight="normal" letter-spacing="0" stroke="#151515" stroke-width=".2">18</text>
<rect x="454.1" y="516.5" width="3.8" height="3.6" fill="#8a8a84"/>
<text x="443.8" y="525.6" font-size="8.2" fill="#151515" text-anchor="end" font-weight="normal" letter-spacing="0.22" stroke="#151515" stroke-width=".22">RC7/RX/DT</text>
<text x="294.4" y="539.8" font-size="6.8" fill="#111" text-anchor="start" font-weight="bold" letter-spacing="0"  textLength="42.0" lengthAdjust="spacingAndGlyphs">PIC16F876</text>
<text x="294.6" y="550.2" font-size="7.5" fill="#8c8d84" text-anchor="start" font-weight="normal" letter-spacing="0" >&lt;TEXT&gt;</text>
<rect x="634.6" y="581.6" width="143.5" height="175.8" fill="#c7caaa" stroke="#b4564a" stroke-width="1.4"/>
<path d="M666.0,561.4V581.6" stroke="#96403a" stroke-width="1.3"/>
<rect x="657.3" y="569.2" width="5.0" height="4.0" fill="#e84a50"/>
<path d="M705.0,561.4V581.6" stroke="#96403a" stroke-width="1.3"/>
<rect x="696.3" y="569.2" width="5.0" height="4.0" fill="#e84a50"/>
<path d="M746.8,561.4V581.6" stroke="#96403a" stroke-width="1.3"/>
<rect x="738.1" y="569.2" width="5.0" height="4.0" fill="#e84a50"/>
<text x="666.0" y="588.6" font-size="4.5" fill="#444" text-anchor="middle" font-weight="normal" letter-spacing="0" >1</text>
<text x="705.0" y="588.6" font-size="4.5" fill="#444" text-anchor="middle" font-weight="normal" letter-spacing="0" >2</text>
<text x="746.8" y="588.6" font-size="4.5" fill="#444" text-anchor="middle" font-weight="normal" letter-spacing="0" >3</text>
<path d="M613.5,610.9H634.6" stroke="#96403a" stroke-width="1.3"/>
<rect x="621.4" y="603.3" width="5.0" height="4.0" fill="#3a3ad8"/>
<text x="642.3" y="613.5" font-size="7" fill="#222" text-anchor="middle" font-weight="normal" letter-spacing="0" >A</text>
<circle cx="666.0" cy="610.9" r="14.7" fill="#cecfd1" stroke="#484846" stroke-width="1"/>
<text transform="translate(666.0,618.3) scale(.9,1)" font-size="20" font-weight="bold" fill="#151515" text-anchor="middle">1</text>
<circle cx="705.0" cy="610.9" r="14.7" fill="#cecfd1" stroke="#484846" stroke-width="1"/>
<text transform="translate(705.0,618.3) scale(.9,1)" font-size="20" font-weight="bold" fill="#151515" text-anchor="middle">2</text>
<circle cx="746.8" cy="610.9" r="14.7" fill="#cecfd1" stroke="#484846" stroke-width="1"/>
<text transform="translate(746.8,618.3) scale(.9,1)" font-size="20" font-weight="bold" fill="#151515" text-anchor="middle">3</text>
<path d="M613.5,649.7H634.6" stroke="#96403a" stroke-width="1.3"/>
<rect x="621.4" y="642.1" width="5.0" height="4.0" fill="#3a3ad8"/>
<text x="642.3" y="652.3" font-size="7" fill="#222" text-anchor="middle" font-weight="normal" letter-spacing="0" >B</text>
<circle cx="666.0" cy="649.7" r="14.7" fill="#cecfd1" stroke="#484846" stroke-width="1"/>
<text transform="translate(666.0,657.1) scale(.9,1)" font-size="20" font-weight="bold" fill="#151515" text-anchor="middle">4</text>
<circle cx="705.0" cy="649.7" r="14.7" fill="#cecfd1" stroke="#484846" stroke-width="1"/>
<text transform="translate(705.0,657.1) scale(.9,1)" font-size="20" font-weight="bold" fill="#151515" text-anchor="middle">5</text>
<circle cx="746.8" cy="649.7" r="14.7" fill="#cecfd1" stroke="#484846" stroke-width="1"/>
<text transform="translate(746.8,657.1) scale(.9,1)" font-size="20" font-weight="bold" fill="#151515" text-anchor="middle">6</text>
<path d="M613.5,688.6H634.6" stroke="#96403a" stroke-width="1.3"/>
<rect x="621.4" y="681.0" width="5.0" height="4.0" fill="#3a3ad8"/>
<text x="642.3" y="691.2" font-size="7" fill="#222" text-anchor="middle" font-weight="normal" letter-spacing="0" >C</text>
<circle cx="666.0" cy="688.6" r="14.7" fill="#cecfd1" stroke="#484846" stroke-width="1"/>
<text transform="translate(666.0,696.0) scale(.9,1)" font-size="20" font-weight="bold" fill="#151515" text-anchor="middle">7</text>
<circle cx="705.0" cy="688.6" r="14.7" fill="#cecfd1" stroke="#484846" stroke-width="1"/>
<text transform="translate(705.0,696.0) scale(.9,1)" font-size="20" font-weight="bold" fill="#151515" text-anchor="middle">8</text>
<circle cx="746.8" cy="688.6" r="14.7" fill="#cecfd1" stroke="#484846" stroke-width="1"/>
<text transform="translate(746.8,696.0) scale(.9,1)" font-size="20" font-weight="bold" fill="#151515" text-anchor="middle">9</text>
<path d="M613.5,727.6H634.6" stroke="#96403a" stroke-width="1.3"/>
<rect x="621.4" y="720.0" width="5.0" height="4.0" fill="#3a3ad8"/>
<text x="642.3" y="730.2" font-size="7" fill="#222" text-anchor="middle" font-weight="normal" letter-spacing="0" >D</text>
<circle cx="666.0" cy="727.6" r="14.7" fill="#cecfd1" stroke="#484846" stroke-width="1"/>
<path d="M666.0,721.1v13M660.5,724.3l11,6.6M660.5,730.9l11,-6.6" stroke="#151515" stroke-width="2" fill="none"/>
<circle cx="705.0" cy="727.6" r="14.7" fill="#cecfd1" stroke="#484846" stroke-width="1"/>
<text transform="translate(705.0,735.0) scale(.9,1)" font-size="20" font-weight="bold" fill="#151515" text-anchor="middle">0</text>
<circle cx="746.8" cy="727.6" r="14.7" fill="#cecfd1" stroke="#484846" stroke-width="1"/>
<text transform="translate(746.8,734.0) scale(.9,1)" font-size="17.5" font-weight="bold" fill="#151515" text-anchor="middle">#</text>
<path d="M450.4,367.0H470.5" stroke="#3c4a38" stroke-width="1.2"/>
<path d="M450.4,396.5H470.5" stroke="#3c4a38" stroke-width="1.2"/>
<path d="M450.4,406.5H470.5" stroke="#3c4a38" stroke-width="1.2"/>
<path d="M450.4,416.3H470.5" stroke="#3c4a38" stroke-width="1.2"/>
<path d="M450.4,426.0H470.5" stroke="#3c4a38" stroke-width="1.2"/>
<path d="M450.4,435.6H470.5" stroke="#3c4a38" stroke-width="1.2"/>
<path d="M531.7,162.4V182" stroke="#3c4a38" stroke-width="1.2"/>
<path d="M552.1,162.4V182" stroke="#3c4a38" stroke-width="1.2"/>
<path d="M613.9,162.4V182" stroke="#3c4a38" stroke-width="1.2"/>
<path d="M624.2,162.4V182" stroke="#3c4a38" stroke-width="1.2"/>
<path d="M634.6,162.4V182" stroke="#3c4a38" stroke-width="1.2"/>
<path d="M644.9,162.4V182" stroke="#3c4a38" stroke-width="1.2"/>
<g stroke="#3030c0" stroke-width="1" fill="none"><path d="M675.5,459.6l4.4,4.7l-4.4,4.7l-4.4,-4.7zM675.5,458.6v11.4M669.6,464.3h11.8"/></g>
</g>
<g id="tb"><path d="M4.5,40V57h-2" stroke="#a8a8a8" fill="none"/>
<g transform="translate(12.0,43.0)"><path d="M.5,.5h6.5l4,4v6.8h-10.5z" fill="#fff" stroke="#111" stroke-width="1.1"/><path d="M7,.5v4h4" fill="none" stroke="#111" stroke-width="1"/></g>
<g transform="translate(31.0,43.0)"><path d="M.5,2.6h5l1,1.5h6v6.6h-12z" fill="#7c7a18" stroke="#3c3c10" stroke-width=".9"/><path d="M.8,10.8l3,-5.2h11.5l-3,5.2z" fill="#e8e048" stroke="#4c4a14" stroke-width=".9"/><path d="M8.6,1.6q3.4,-2.2 5.6,1" stroke="#222" fill="none" stroke-width="1.2"/><path d="M15.4,1l-.6,3.4l-2.8,-1.6z" fill="#222"/></g>
<g transform="translate(51.5,42.0)"><rect width="13" height="12.5" fill="#a2a2a2"/></g>
<path d="M71.0,41V57" stroke="#a4a4a4" stroke-width="1"/><path d="M72.0,41V57" stroke="#fcfcfc" stroke-width="1"/>
<g transform="translate(77.0,42.0)"><rect x="5.5" y="0" width="10" height="10" fill="#d4d4d4" stroke="#b0b0b0" stroke-width=".6"/><rect x="0" y="3.5" width="9.5" height="9.5" fill="#a2a2a2"/></g>
<g transform="translate(97.0,42.0)"><rect x=".5" y=".5" width="9" height="9.5" fill="#f4f4f4" stroke="#111"/><rect x="3" y="3" width="4" height="5" fill="#c8c8c8"/><rect x="6.5" y="4.5" width="8" height="8.5" fill="#5c5a14" stroke="#222" stroke-width=".8"/><rect x="8.5" y="5" width="4" height="3" fill="#ddd"/><rect x="9" y="10" width="3" height="3" fill="#222"/></g>
<path d="M118.0,41V57" stroke="#a4a4a4" stroke-width="1"/><path d="M119.0,41V57" stroke="#fcfcfc" stroke-width="1"/>
<g transform="translate(125.0,42.0)"><path d="M3,5V.5h8l1.5,1.5V5z" fill="#fff" stroke="#222" stroke-width=".9"/><rect x=".5" y="4.5" width="14.5" height="6" rx="1.2" fill="#6c6c6c" stroke="#222" stroke-width=".9"/><rect x="2.5" y="9.5" width="10.5" height="3.5" fill="#d8d8d8" stroke="#222" stroke-width=".9"/></g>
<g transform="translate(146.0,42.5)"><path d="M.5,.5h6.5l4,4v8.6h-10.5z" fill="#fff" stroke="#111" stroke-width="1.1"/><path d="M7,.5v4h4" fill="none" stroke="#111" stroke-width="1"/><rect x="3" y="5.5" width="5" height="6" fill="#8c8c8c"/></g>
<path d="M168.0,41V57" stroke="#a4a4a4" stroke-width="1"/><path d="M169.0,41V57" stroke="#fcfcfc" stroke-width="1"/>
<path d="M173.5,40V57.5h-2.6" stroke="#a6a6a6" stroke-width="1" fill="none"/><path d="M174.5,40V56.5" stroke="#fafafa" stroke-width="1" fill="none"/>
<g transform="translate(180.5,42.5)"><path d="M.5,.5h6.5l4,4v8.6h-10.5z" fill="#c8f0d0" stroke="#111" stroke-width="1.1"/><path d="M7,.5v4h4" fill="none" stroke="#111" stroke-width="1"/><path d="M3.6,8.4a2.6,2.6 0 0 1 4,-2.6M8.2,7.6a2.6,2.6 0 0 1 -4,2.6" stroke="#1c8c2c" stroke-width="1.4" fill="none"/><path d="M6.6,4.2l2,1.8l-2.6,.8zM5.2,11.8l-2,-1.8l2.6,-.8z" fill="#1c8c2c"/></g>
<path d="M198.0,41V57" stroke="#a4a4a4" stroke-width="1"/><path d="M199.0,41V57" stroke="#fcfcfc" stroke-width="1"/>
<g transform="translate(202.4,45.0)"><rect x="0" y="0" width="2.2" height="2.2" fill="#111"/><rect x="4" y="0" width="2.2" height="2.2" fill="#111"/><rect x="8" y="0" width="2.2" height="2.2" fill="#111"/><rect x="0" y="4" width="2.2" height="2.2" fill="#111"/><rect x="4" y="4" width="2.2" height="2.2" fill="#111"/><rect x="8" y="4" width="2.2" height="2.2" fill="#111"/><rect x="0" y="8" width="2.2" height="2.2" fill="#111"/><rect x="4" y="8" width="2.2" height="2.2" fill="#111"/><rect x="8" y="8" width="2.2" height="2.2" fill="#111"/></g>
<path d="M220.5,41V57" stroke="#a4a4a4" stroke-width="1"/><path d="M221.5,41V57" stroke="#fcfcfc" stroke-width="1"/>
<g transform="translate(227.0,41.7)"><path d="M0,7h14M7,0v14" stroke="#58561a" stroke-width="1.3"/><rect x="4.3" y="4.3" width="5.4" height="5.4" fill="none" stroke="#58561a" stroke-width="1.2"/></g>
<path d="M247.5,41V57" stroke="#a4a4a4" stroke-width="1"/><path d="M248.5,41V57" stroke="#fcfcfc" stroke-width="1"/>
<g transform="translate(253.6,41.7)"><path d="M7,0L10.5,3.6H8.5V5.5H10.4V3.5L14,7L10.4,10.5V8.5H8.5V10.4H10.5L7,14L3.5,10.4H5.5V8.5H3.6V10.5L0,7L3.6,3.5V5.5H5.5V3.6H3.5Z" fill="#0c0c78"/></g>
<g transform="translate(273.5,42.0)"><circle cx="5.4" cy="5.4" r="4.6" fill="#fff" stroke="#111" stroke-width="1.7"/><path d="M8.8,8.8l4.2,4.2" stroke="#111" stroke-width="2.4" stroke-linecap="round"/><path d="M2.8,5.4h5.2M5.4,2.8v5.2" stroke="#111" stroke-width="1.8"/></g>
<g transform="translate(293.3,42.0)"><circle cx="5.4" cy="5.4" r="4.6" fill="#fff" stroke="#111" stroke-width="1.7"/><path d="M8.8,8.8l4.2,4.2" stroke="#111" stroke-width="2.4" stroke-linecap="round"/><path d="M2.8,5.4h5.2" stroke="#111" stroke-width="1.8"/></g>
<g transform="translate(313.2,42.0)"><circle cx="5.4" cy="5.4" r="4.6" fill="#fff" stroke="#111" stroke-width="1.7"/><path d="M8.8,8.8l4.2,4.2" stroke="#111" stroke-width="2.4" stroke-linecap="round"/><rect x="3.2" y="3.4" width="4.4" height="4" fill="#8c8c8c" stroke="#222" stroke-width=".8"/></g>
<g transform="translate(333.0,41.5)"><path d="M.5,.5h14v13h-2.6l-1.5,-1.8l-1.5,1.8l-1.5,-1.8l-1.5,1.8l-1.5,-1.8l-1.3,1.8h-2.6z" fill="#3c3c3c" stroke="#111" stroke-width=".8"/><circle cx="7.6" cy="6" r="5.5" fill="#f6f6f6" stroke="#222" stroke-width=".8"/></g>
<path d="M357.0,41V57" stroke="#a4a4a4" stroke-width="1"/><path d="M358.0,41V57" stroke="#fcfcfc" stroke-width="1"/>
<path d="M362.5,40V57.5h-2.6" stroke="#a6a6a6" stroke-width="1" fill="none"/><path d="M363.5,40V56.5" stroke="#fafafa" stroke-width="1" fill="none"/>
<g transform="translate(369.0,44.5)"><path d="M2.2,4.6a4,3.6 0 1 1 6.4,1.8" fill="none" stroke="#1c1c88" stroke-width="1.5"/><path d="M0,1.2l.6,5.6l5,-2z" fill="#10108c"/></g>
<g transform="translate(388.0,44.5)"><path d="M9.6,4.6a4,3.6 0 1 0 -6.4,1.8" fill="none" stroke="#1c1c88" stroke-width="1.5"/><path d="M11.8,1.2l-.6,5.6l-5,-2z" fill="#10108c"/></g>
<path d="M408.3,41V57" stroke="#a4a4a4" stroke-width="1"/><path d="M409.3,41V57" stroke="#fcfcfc" stroke-width="1"/>
<g transform="translate(416.0,42.0)"><path d="M2.2,0l3.6,8.6M7,0l-3.6,8.6" stroke="#a2a2a2" stroke-width="1.1"/><circle cx="2.2" cy="10.6" r="1.9" fill="none" stroke="#a2a2a2"/><circle cx="7" cy="10.6" r="1.9" fill="none" stroke="#a2a2a2"/></g>
<g transform="translate(435.0,42.0)"><path d="M.5,.5h5l2,2v7h-7z" fill="#fff" stroke="#111"/><path d="M2,4h3.5M2,6h3.5" stroke="#111" stroke-width=".8"/><path d="M6.5,3.5h5l2,2v7.5h-7z" fill="#fff" stroke="#111"/><path d="M8,7h4M8,9h4M8,11h4" stroke="#111" stroke-width=".8"/></g>
<g transform="translate(455.0,42.0)"><path d="M1,2.5h3l1.5,-2h3l1.5,2h1.5v8.5h-10.5z" fill="#a2a2a2"/><rect x="6.5" y="7.5" width="8" height="5" fill="#e6e6e6" stroke="#a2a2a2"/><path d="M8,10h5" stroke="#a2a2a2"/></g>
<path d="M476.0,41V57" stroke="#a4a4a4" stroke-width="1"/><path d="M477.0,41V57" stroke="#fcfcfc" stroke-width="1"/>
<g transform="translate(483.0,42.2)"><path d="M0,0h13v4.8h-3.6v3.8h3.6v4.8h-13v-4.8h3.6v-3.8h-3.6z" fill="#a2a2a2"/></g>
<g transform="translate(503.0,42.2)"><path d="M0,0h13v4.8h-3.6v3.8h3.6v4.8h-13v-4.8h3.6v-3.8h-3.6z" fill="#a2a2a2"/></g>
<g transform="translate(522.0,42.2)"><rect width="14" height="13.4" fill="#a2a2a2"/></g>
<g transform="translate(542.0,42.2)"><rect width="13.6" height="13.4" fill="#a2a2a2"/></g>
<path d="M562.3,41V57" stroke="#a4a4a4" stroke-width="1"/><path d="M563.3,41V57" stroke="#fcfcfc" stroke-width="1"/>
<g transform="translate(569.0,42.0)"><path d="M1,1h9v8h-9z" fill="#a2a2a2"/><circle cx="7" cy="6" r="3.8" fill="#d4d4d4" stroke="#a2a2a2" stroke-width="1.8"/><path d="M9.6,8.8l3.6,3.8" stroke="#a2a2a2" stroke-width="2.4"/></g>
<g transform="translate(592.0,42.0)"><path d="M0,5.6h11M0,9h10M7.4,0l-3.4,12.6M5,2.6l4,1.4" stroke="#a2a2a2" stroke-width="2.1" fill="none"/></g>
<g transform="translate(609.5,42.0)"><rect x="1.2" y="1.2" width="11.6" height="11.2" fill="#a2a2a2"/><path d="M0,3h14M0,5.4h14M0,7.8h14M0,10.2h14M3.4,0v13.5M5.8,0v13.5M8.2,0v13.5M10.6,0v13.5" stroke="#a2a2a2" stroke-width="1.1"/></g>
<g transform="translate(629.3,42.5)"><path d="M.8,12l8.4,-8.4" stroke="#a2a2a2" stroke-width="2"/><path d="M5.2,1l4.4,2.2l3,3.8" stroke="#a2a2a2" stroke-width="2.2" fill="none"/></g>
<path d="M651.5,41V57" stroke="#a4a4a4" stroke-width="1"/><path d="M652.5,41V57" stroke="#fcfcfc" stroke-width="1"/>
<path d="M657.0,40V57.5h-2.6" stroke="#a6a6a6" stroke-width="1" fill="none"/><path d="M658.0,40V56.5" stroke="#fafafa" stroke-width="1" fill="none"/>
<path d="M662.0,41V57" stroke="#a4a4a4" stroke-width="1"/><path d="M663.0,41V57" stroke="#fcfcfc" stroke-width="1"/>
<g transform="translate(665.0,42.0)"><path d="M6,1.5h5.5a2,2 0 0 1 2,2v8h-4v-6h-3.5z" fill="#d02828" stroke="#7a1818" stroke-width=".6"/><circle cx="5" cy="6" r="4.2" fill="#fff" stroke="#222" stroke-width="1.1"/><rect x="2.2" y="10" width="4.6" height="3" fill="#111"/><rect x="9.5" y="11" width="4" height="2" fill="#111"/></g>
<path d="M681.5,41V57" stroke="#a4a4a4" stroke-width="1"/><path d="M682.5,41V57" stroke="#fcfcfc" stroke-width="1"/>
<g transform="translate(684.8,42.0)"><rect x="2" y=".5" width="6" height="3.6" fill="#2c8c34"/><rect x="7" y="8.8" width="6" height="3.8" fill="#2c8c34"/><path d="M11,2.4h-9.4v4.4h10.4v0M1.6,6.8v4h5" fill="none" stroke="#c03040" stroke-width="1.1"/><rect x=".5" y="9.5" width="3" height="3" fill="#fff" stroke="#c03040" stroke-width=".7"/></g>
<path d="M703.8,41V57" stroke="#a4a4a4" stroke-width="1"/><path d="M704.8,41V57" stroke="#fcfcfc" stroke-width="1"/>
<g transform="translate(709.6,41.5)"><path d="M2.6,0h3l1,3.4v10.1h-6.4v-5z" fill="#0c1c84"/><path d="M13.2,0h-3l-1,3.4v10.1h6.4v-5z" fill="#0c1c84"/><rect x="6" y="3.6" width="4" height="4" fill="#0c1c84"/><path d="M2.2,9.6v2.6M13.6,9.6v2.6" stroke="#e0e4ff" stroke-width=".8"/></g>
<g transform="translate(731.3,42.0)"><path d="M1,12.6l10.6,-10.6M1.4,1l7,7.6M8.4,8.6l4.4,4M2,5.4h9" stroke="#a2a2a2" stroke-width="1.5" fill="none"/></g>
<path d="M751.3,41V57" stroke="#a4a4a4" stroke-width="1"/><path d="M752.3,41V57" stroke="#fcfcfc" stroke-width="1"/>
<g transform="translate(760.0,42.5)"><path d="M.5,.5h6.5l3.5,3.5v9h-10z" fill="#f4f4f4" stroke="#a2a2a2"/><path d="M2.6,7.4h6M5.6,4.4v6" stroke="#a2a2a2" stroke-width="1.1"/></g>
<g transform="translate(778.6,42.5)"><rect x="1.5" y="1.5" width="9.5" height="10" fill="#e4e4e4" stroke="#a2a2a2"/><path d="M0,0l12.6,13M12.6,0l-12.6,13" stroke="#a2a2a2" stroke-width="1.4"/></g>
<g transform="translate(798.0,42.5)"><path d="M.5,.5h6l3.5,3.5v9h-9.5z" fill="#fff" stroke="#111"/><path d="M15,7h-8" stroke="#1020c8" stroke-width="2"/><path d="M3.4,7l4.4,-3.6v7.2z" fill="#1020c8"/></g>
<g transform="translate(817.4,41.5)"><path d="M7.4,0l3.4,5.4h-6.8z" fill="#30b038"/><rect x="0" y="9" width="4.6" height="4.4" fill="#30b038"/><rect x="10" y="9" width="4.6" height="4.4" fill="#30b038"/><path d="M5.4,6.6a3.4,3.4 0 1 0 5,.4" fill="none" stroke="#181818" stroke-width="1.2"/><path d="M4.6,11.4h3.4" stroke="#181818"/></g>
<g transform="translate(836.6,41.5)"><path d="M1,12l5,-9l3,2l5,8" fill="none" stroke="#f0e020" stroke-width="1.6"/><rect x="4.6" y="1" width="3" height="3" fill="#f0e020"/><rect x="0" y="10.6" width="3" height="3" fill="#f0e020"/><path d="M10.4,2.4a3.4,3.4 0 1 1 -1,6" fill="none" stroke="#181818" stroke-width="1.3"/><path d="M9.4,.6l2,2.6l-3,.4z" fill="#181818"/><rect x="11.5" y="10.6" width="3" height="3" fill="#f0e020"/></g>
<path d="M858.0,41V57" stroke="#a4a4a4" stroke-width="1"/><path d="M859.0,41V57" stroke="#fcfcfc" stroke-width="1"/>
<g transform="translate(866.2,42.5)"><path d="M.5,.5h6.5l4,4v8.6h-10.5z" fill="#f6f4c8" stroke="#111" stroke-width="1.1"/><path d="M7,.5v4h4" fill="none" stroke="#111" stroke-width="1"/><text x="3" y="11.4" font-size="9" font-weight="bold" fill="#1c8c2c">$</text></g>
<g transform="translate(884.8,42.5)"><path d="M.5,.5h6.5l4,4v8.6h-10.5z" fill="#f8f8f8" stroke="#111" stroke-width="1.1"/><path d="M7,.5v4h4" fill="none" stroke="#111" stroke-width="1"/><path d="M7,4l-3,4h2.4l-1.6,4l4,-5.2h-2.4z" fill="#1878d8"/></g>
<path d="M905.8,41V57" stroke="#a4a4a4" stroke-width="1"/><path d="M906.8,41V57" stroke="#fcfcfc" stroke-width="1"/>
<g transform="translate(912.0,42.7)"><rect width="14.7" height="12.3" fill="#d42424"/><text x="1.6" y="8.4" font-size="5.4" font-weight="bold" fill="#ffd8d8" textLength="11.6" lengthAdjust="spacingAndGlyphs">ARES</text><path d="M1.5,10.4h11.7" stroke="#fff" stroke-width=".7"/></g></g>
<g id="side"><path d="M3,64.5H24" stroke="#b8b8b8"/><path d="M3,65.5H24" stroke="#fff"/>
<rect x="2.5" y="69" width="19" height="19" fill="#f8f8f8" stroke="#d0d0d0" stroke-width="1"/><path d="M2.5,88V69H21.5" stroke="#fff" fill="none"/>
<g transform="translate(5.0,72.0)"><path d="M0,4h5M0,10h5M11,7h3" stroke="#222" stroke-width="1.1"/><path d="M4,.6l7.6,6.4l-7.6,6.4z" fill="#a4a21c" stroke="#3c3c10" stroke-width=".9"/></g>
<g transform="translate(5.0,91.0)"><path d="M0,6.5h13M6.5,0v13" stroke="#5c2cc4" stroke-width="1.5"/><rect x="4" y="4" width="5" height="5" fill="#5c2cc4"/></g>
<g transform="translate(4.8,112.5)"><rect x=".5" y=".5" width="13.6" height="7" fill="#f4f4fc" stroke="#3c3c9c" stroke-width=".9" stroke-dasharray="1.2,1"/><text x="7.4" y="6.4" font-size="5.8" font-weight="bold" fill="#20207c" text-anchor="middle">LBL</text></g>
<g transform="translate(6.5,130.0)"><path d="M0,1h11M0,4h11M0,7h11M1,10h9" stroke="#333" stroke-width="1.3" stroke-dasharray="3.4,1"/></g>
<g transform="translate(4.5,148.5)"><path d="M0,5h14" stroke="#1c1c9c" stroke-width="2"/><path d="M4,0v10.4M10.6,0v10.4" stroke="#1c1c9c" stroke-width="1.5"/></g>
<g transform="translate(4.5,167.5)"><path d="M0,3h14M0,7.4h14" stroke="#222" stroke-width="1.1"/><rect x="3.6" y=".5" width="6.4" height="9.6" fill="#a4a21c" stroke="#3c3c10" stroke-width=".9"/></g>
<g transform="translate(7.6,185.2)"><path d="M0,0v10.6l2.6,-2.4l2.2,4.6l2,-1l-2.2,-4.4h3.6z" fill="#111"/></g>
<path d="M3,201.0H24" stroke="#b8b8b8"/><path d="M3,202.0H24" stroke="#fff"/>
<g transform="translate(6.0,208.0)"><path d="M0,0h8l2.4,2l-2.4,2h-8z" fill="#a4a21c" stroke="#55541a" stroke-width=".6"/><path d="M2.4,5.8h8v4h-8l-2.4,-2z" fill="#a4a21c" stroke="#55541a" stroke-width=".6"/></g>
<g transform="translate(4.6,226.6)"><path d="M0,2.4h4M0,7.2h4M11,4.8h3" stroke="#3c8c44" stroke-width="1" stroke-dasharray="1.6,.8"/><path d="M4,.4h3a4.4,4.4 0 0 1 0,8.8h-3z" fill="#f4f4f4" stroke="#2c6c34" stroke-width="1"/></g>
<g transform="translate(4.8,245.6)"><path d="M0,8.6h14" stroke="#222" stroke-width="1.3"/><path d="M1,7.4v-6M2.4,7l2.6,-5l2,4.6l2.4,-5.4l3,5.8" fill="none" stroke="#2c7c34" stroke-width="1.2"/><path d="M1,1.4h2" stroke="#222"/></g>
<g transform="translate(4.6,265.6)"><path d="M.6,0v7.4h12.8v-7.4" fill="none" stroke="#222" stroke-width="1.1"/><circle cx="4.2" cy="4.2" r="1.5" fill="none" stroke="#222" stroke-width=".8"/><circle cx="9.8" cy="4.2" r="1.5" fill="none" stroke="#222" stroke-width=".8"/><path d="M2.6,7h8.8" stroke="#222" stroke-width=".8"/></g>
<g transform="translate(4.8,281.4)"><circle cx="7.2" cy="7.2" r="6.4" fill="#fff" stroke="#10106c" stroke-width="1.3"/><path d="M3.4,8.6c.4,-4.6 3.4,-4.6 3.8,-1.4s3.4,3.2 3.8,-1.4" fill="none" stroke="#1828c8" stroke-width="1.5"/></g>
<g transform="translate(4.6,300.4)"><path d="M1,12.4l2.4,-3.6l5,-4.4l1.4,1.6l-5,4.4z" fill="#9c9a2c" stroke="#3c3c10" stroke-width=".6"/><path d="M9,5.4c2,-3.4 4.4,-2.6 4.4,1.6v3" fill="none" stroke="#222" stroke-width="1.1"/><text x="0" y="4.4" font-size="5" font-weight="bold" fill="#20208c">V</text></g>
<g transform="translate(4.6,319.4)"><path d="M1,12.4l2.4,-3.6l5,-4.4l1.4,1.6l-5,4.4z" fill="#9c9a2c" stroke="#3c3c10" stroke-width=".6"/><path d="M9,5.4c2,-3.4 4.4,-2.6 4.4,1.6v3" fill="none" stroke="#222" stroke-width="1.1"/><text x=".6" y="4.4" font-size="5" font-weight="bold" fill="#20208c">I</text></g>
<g transform="translate(6.0,339.4)"><rect x=".5" y=".5" width="12.4" height="11.4" fill="#fff" stroke="#111" stroke-width="1.2"/><path d="M2.4,7.6a4.4,4.4 0 0 1 8.6,0z" fill="#e8e8e8" stroke="#111" stroke-width=".9"/><rect x="2.4" y="8" width="8.6" height="3" fill="#555"/></g>
<path d="M3,356.0H24" stroke="#b8b8b8"/><path d="M3,357.0H24" stroke="#fff"/>
<path d="M4.5,373.8L17,362.2" stroke="#111" stroke-width="1.6"/>
<g transform="translate(6.0,381.4)"><rect x=".5" y=".5" width="11.2" height="10.8" fill="#00b4b4" stroke="#143c3c" stroke-width="1"/></g>
<g transform="translate(6.0,400.0)"><path d="M3.4,.5h5l2.9,2.9v4.2l-2.9,2.9h-5l-2.9,-2.9v-4.2z" fill="#00b4b4" stroke="#143c3c" stroke-width="1"/></g>
<g transform="translate(6.5,418.6)"><path d="M.5,.5v9.6h10.4" fill="none" stroke="#20208c" stroke-width="1" stroke-dasharray="1.2,1.2"/><path d="M.5,.5c6,0 10.4,4 10.4,9.6" fill="none" stroke="#222" stroke-width="1.1"/></g>
<g transform="translate(4.0,438.6)"><path d="M.6,5.2c0,-6 5,-6 7,-2.4c2,-3.6 7,-3.6 7,2.4s-5,6 -7,2.4c-2,3.6 -7,3.6 -7,-2.4z" fill="#00b4b4" stroke="#143c3c" stroke-width="1"/></g>
<text x="12" y="468.2" style="font-family:'Liberation Serif',serif" font-size="17.5" font-weight="bold" fill="#111" text-anchor="middle">A</text>
<g transform="translate(5.5,475.0)"><rect x=".6" y=".6" width="11.6" height="11.6" fill="#1c9c9c" stroke="#0c3c3c" stroke-width="1.2"/><path d="M9.4,3.4h-6v3h6v3h-6" fill="none" stroke="#0c3434" stroke-width="1.4"/></g>
<g transform="translate(4.6,493.0)"><path d="M0,6.5h13M6.5,0v13" stroke="#145c54" stroke-width="1.3"/><rect x="4" y="4" width="5" height="5" fill="#145c54"/></g>
<path d="M3,514.0H24" stroke="#b8b8b8"/><path d="M3,515.0H24" stroke="#fff"/>
<path d="M3,519.5H24" stroke="#b8b8b8"/><path d="M3,520.5H24" stroke="#fff"/>
<g transform="translate(5.6,527.4)"><path d="M9.4,3.6a4.6,4.6 0 1 0 1.4,4.6" fill="none" stroke="#1414cc" stroke-width="2.8"/><path d="M6.6,4.8h6.4v-5z" fill="#1414cc"/></g>
<g transform="translate(5.6,545.8)"><path d="M3.8,3.6a4.6,4.6 0 1 1 -1.4,4.6" fill="none" stroke="#1414cc" stroke-width="2.8"/><path d="M6.6,4.8h-6.4v-5z" fill="#1414cc"/></g>
<rect x="2" y="562.5" width="21.6" height="13.4" fill="#fff"/><path d="M2,576V562.5H23.6" fill="none" stroke="#444" stroke-width="1"/><path d="M2.5,576H23.6V563" fill="none" stroke="#e0e0e0" stroke-width="1"/><text x="3.6" y="573" font-size="9.4" fill="#333">0°</text>
<path d="M3,581.0H24" stroke="#b8b8b8"/><path d="M3,582.0H24" stroke="#fff"/>
<g transform="translate(4.5,588.6)"><path d="M0,5l5,-4.4v2.8h3v3.2h-3v2.8z" fill="#9c9cf0"/><path d="M14.6,5l-5,-4.4v2.8h-3v3.2h3v2.8z" fill="#1414cc"/></g>
<g transform="translate(6.4,605.6)"><path d="M5,0l-4.4,5h2.8v2.4h3.2v-2.4h2.8z" fill="#1414cc"/><path d="M5,13.6l-4.4,-5h2.8v-2h3.2v2h2.8z" fill="#9c9cf0"/></g></g>
<g id="ov"><rect x="28.9" y="64.6" width="113.6" height="89" fill="#dfe0d2" stroke="#a6a6a0" stroke-width="1.2"/>
<path d="M37.5,65.2V153M133.7,65.2V153M37.5,65.8H133.7" stroke="#34c834" stroke-width="1.2" fill="none"/>
<rect x="39.6" y="72" width="92.4" height="73.6" fill="none" stroke="#d4d4ec" stroke-width="1"/><rect x="38.9" y="71.3" width="93.8" height="75" fill="none" stroke="#2a2a86" stroke-width="1.1"/>
<path d="M40.7,88.4 L73.6,88.4" fill="none" stroke="#101010" stroke-width="1.25"/>
<path d="M68.9,77.6 L68.9,88.4" fill="none" stroke="#101010" stroke-width="1.25"/>
<path d="M70.8,77.6 L70.8,88.4" fill="none" stroke="#101010" stroke-width="1.25"/>
<path d="M73.6,77.6 L73.6,88.4" fill="none" stroke="#101010" stroke-width="1.25"/>
<path d="M69.8,77.6 L69.8,91.6" fill="none" stroke="#101010" stroke-width="1.25"/>
<path d="M74.5,77.6 L74.5,98.0 L67.0,98.0" fill="none" stroke="#101010" stroke-width="1.25"/>
<path d="M72.6,77.6 L72.6,101.3 L67.0,101.3" fill="none" stroke="#101010" stroke-width="1.25"/>
<path d="M80.1,77.6 L80.1,102.4 L67.0,102.4" fill="none" stroke="#101010" stroke-width="1.25"/>
<path d="M81.1,77.6 L81.1,103.5 L67.0,103.5" fill="none" stroke="#101010" stroke-width="1.25"/>
<path d="M82.0,77.6 L82.0,104.5 L67.0,104.5" fill="none" stroke="#101010" stroke-width="1.25"/>
<path d="M83.0,77.6 L83.0,105.6 L67.0,105.6" fill="none" stroke="#101010" stroke-width="1.25"/>
<path d="M40.7,91.6 L41.7,91.6" fill="none" stroke="#101010" stroke-width="1.25"/>
<path d="M41.7,91.6 L91.3,91.6 L91.3,99.2" fill="none" stroke="#101010" stroke-width="1.25"/>
<path d="M86.6,101.2 L86.6,99.2 L96.0,99.2 L96.0,101.2" fill="none" stroke="#101010" stroke-width="1.25"/>
<path d="M91.3,99.2 L91.3,101.2" fill="none" stroke="#101010" stroke-width="1.25"/>
<path d="M43.6,91.6 L43.6,93.8" fill="none" stroke="#101010" stroke-width="1.25"/>
<path d="M43.6,96.9 L43.6,100.2 L49.1,100.2" fill="none" stroke="#101010" stroke-width="1.25"/>
<path d="M43.5,77.6 L42.6,77.6 L42.6,80.9 L46.3,80.9 L46.3,98.0 L49.1,98.0" fill="none" stroke="#101010" stroke-width="1.25"/>
<path d="M47.3,77.6 L49.1,77.6 L49.1,80.9 L47.3,80.9 L47.3,99.1 L49.1,99.1" fill="none" stroke="#101010" stroke-width="1.25"/>
<path d="M67.0,107.8 L78.3,107.8 L78.3,119.4" fill="none" stroke="#101010" stroke-width="1.25"/>
<path d="M78.3,122.7 L78.3,124.9 L80.1,124.9" fill="none" stroke="#101010" stroke-width="1.25"/>
<path d="M67.0,108.8 L75.5,108.8 L75.5,119.4" fill="none" stroke="#101010" stroke-width="1.25"/>
<path d="M75.5,122.7 L75.5,129.1 L80.1,129.1" fill="none" stroke="#101010" stroke-width="1.25"/>
<path d="M67.0,109.8 L72.6,109.8 L72.6,119.4" fill="none" stroke="#101010" stroke-width="1.25"/>
<path d="M72.6,122.7 L72.6,133.4 L80.1,133.4" fill="none" stroke="#101010" stroke-width="1.25"/>
<path d="M67.0,110.9 L69.8,110.9 L69.8,119.4" fill="none" stroke="#101010" stroke-width="1.25"/>
<path d="M69.8,122.7 L69.8,137.7 L80.1,137.7" fill="none" stroke="#101010" stroke-width="1.25"/>
<path d="M67.0,111.9 L86.6,111.9" fill="none" stroke="#101010" stroke-width="1.25"/>
<path d="M67.0,113.0 L91.3,113.0 L91.3,104.5" fill="none" stroke="#101010" stroke-width="1.25"/>
<path d="M67.0,114.1 L96.0,114.1" fill="none" stroke="#101010" stroke-width="1.25"/>
<path d="M86.6,104.5 L86.6,119.4 L84.9,119.4" fill="none" stroke="#101010" stroke-width="1.25"/>
<path d="M90.4,113.0 L90.4,119.4 L88.5,119.4" fill="none" stroke="#101010" stroke-width="1.25"/>
<path d="M96.0,104.5 L96.0,118.4 L92.3,118.4 L92.3,119.4" fill="none" stroke="#101010" stroke-width="1.25"/>
<rect x="66.9" y="66.9" width="18.9" height="8.6" fill="#dfe0d2" stroke="#1a1a1a" stroke-width="1"/>
<rect x="67.9" y="68.1" width="17.0" height="4.4" fill="#dfe0d2" stroke="#1a1a1a" stroke-width="1"/>
<path d="M68.9,75.4V77.6" stroke="#1a1a1a" stroke-width=".9"/>
<path d="M69.8,75.4V77.6" stroke="#1a1a1a" stroke-width=".9"/>
<path d="M70.8,75.4V77.6" stroke="#1a1a1a" stroke-width=".9"/>
<path d="M72.6,75.4V77.6" stroke="#1a1a1a" stroke-width=".9"/>
<path d="M73.6,75.4V77.6" stroke="#1a1a1a" stroke-width=".9"/>
<path d="M74.5,75.4V77.6" stroke="#1a1a1a" stroke-width=".9"/>
<path d="M76.4,75.4V77.6" stroke="#1a1a1a" stroke-width=".9"/>
<path d="M77.3,75.4V77.6" stroke="#1a1a1a" stroke-width=".9"/>
<path d="M78.3,75.4V77.6" stroke="#1a1a1a" stroke-width=".9"/>
<path d="M79.2,75.4V77.6" stroke="#1a1a1a" stroke-width=".9"/>
<path d="M80.1,75.4V77.6" stroke="#1a1a1a" stroke-width=".9"/>
<path d="M81.1,75.4V77.6" stroke="#1a1a1a" stroke-width=".9"/>
<path d="M82.0,75.4V77.6" stroke="#1a1a1a" stroke-width=".9"/>
<path d="M83.0,75.4V77.6" stroke="#1a1a1a" stroke-width=".9"/>
<rect x="51.0" y="97.0" width="14.2" height="19.2" fill="#dfe0d2" stroke="#1a1a1a" stroke-width="1"/>
<path d="M65.1,98.0H67.0" stroke="#1a1a1a" stroke-width=".9"/>
<path d="M65.1,99.1H67.0" stroke="#1a1a1a" stroke-width=".9"/>
<path d="M65.1,100.2H67.0" stroke="#1a1a1a" stroke-width=".9"/>
<path d="M65.1,101.3H67.0" stroke="#1a1a1a" stroke-width=".9"/>
<path d="M65.1,102.4H67.0" stroke="#1a1a1a" stroke-width=".9"/>
<path d="M65.1,103.5H67.0" stroke="#1a1a1a" stroke-width=".9"/>
<path d="M65.1,104.5H67.0" stroke="#1a1a1a" stroke-width=".9"/>
<path d="M65.1,105.6H67.0" stroke="#1a1a1a" stroke-width=".9"/>
<path d="M65.1,107.8H67.0" stroke="#1a1a1a" stroke-width=".9"/>
<path d="M65.1,108.8H67.0" stroke="#1a1a1a" stroke-width=".9"/>
<path d="M65.1,109.8H67.0" stroke="#1a1a1a" stroke-width=".9"/>
<path d="M65.1,110.9H67.0" stroke="#1a1a1a" stroke-width=".9"/>
<path d="M65.1,111.9H67.0" stroke="#1a1a1a" stroke-width=".9"/>
<path d="M65.1,113.0H67.0" stroke="#1a1a1a" stroke-width=".9"/>
<path d="M65.1,114.1H67.0" stroke="#1a1a1a" stroke-width=".9"/>
<path d="M65.1,115.2H67.0" stroke="#1a1a1a" stroke-width=".9"/>
<path d="M49.1,98.0H51.0" stroke="#1a1a1a" stroke-width=".9"/>
<path d="M49.1,99.1H51.0" stroke="#1a1a1a" stroke-width=".9"/>
<path d="M49.1,100.2H51.0" stroke="#1a1a1a" stroke-width=".9"/>
<path d="M49.1,102.4H51.0" stroke="#1a1a1a" stroke-width=".9"/>
<path d="M49.1,103.5H51.0" stroke="#1a1a1a" stroke-width=".9"/>
<path d="M49.1,104.5H51.0" stroke="#1a1a1a" stroke-width=".9"/>
<path d="M49.1,105.6H51.0" stroke="#1a1a1a" stroke-width=".9"/>
<path d="M49.1,106.6H51.0" stroke="#1a1a1a" stroke-width=".9"/>
<path d="M49.1,107.7H51.0" stroke="#1a1a1a" stroke-width=".9"/>
<rect x="82.0" y="121.6" width="13.1" height="19.3" fill="#dfe0d2" stroke="#1a1a1a" stroke-width="1"/>
<circle cx="84.9" cy="124.9" r="1.4" fill="#1a1a1a"/>
<circle cx="88.5" cy="124.9" r="1.4" fill="#1a1a1a"/>
<circle cx="92.3" cy="124.9" r="1.4" fill="#1a1a1a"/>
<circle cx="84.9" cy="129.1" r="1.4" fill="#1a1a1a"/>
<circle cx="88.5" cy="129.1" r="1.4" fill="#1a1a1a"/>
<circle cx="92.3" cy="129.1" r="1.4" fill="#1a1a1a"/>
<circle cx="84.9" cy="133.4" r="1.4" fill="#1a1a1a"/>
<circle cx="88.5" cy="133.4" r="1.4" fill="#1a1a1a"/>
<circle cx="92.3" cy="133.4" r="1.4" fill="#1a1a1a"/>
<circle cx="84.9" cy="137.7" r="1.4" fill="#1a1a1a"/>
<circle cx="88.5" cy="137.7" r="1.4" fill="#1a1a1a"/>
<circle cx="92.3" cy="137.7" r="1.4" fill="#1a1a1a"/>
<rect x="43.0" y="93.8" width="1.2" height="3.2" fill="#1a1a1a"/>
<rect x="86.0" y="101.2" width="1.2" height="3.3" fill="#1a1a1a"/>
<rect x="90.7" y="101.2" width="1.2" height="3.3" fill="#1a1a1a"/>
<rect x="95.4" y="101.2" width="1.2" height="3.3" fill="#1a1a1a"/>
<rect x="69.2" y="119.4" width="1.2" height="3.3" fill="#1a1a1a"/>
<rect x="72.0" y="119.4" width="1.2" height="3.3" fill="#1a1a1a"/>
<rect x="74.9" y="119.4" width="1.2" height="3.3" fill="#1a1a1a"/>
<rect x="77.7" y="119.4" width="1.2" height="3.3" fill="#1a1a1a"/>
<rect x="44.8" y="76.2" width="2.4" height="2.6" fill="#dfe0d2" stroke="#1a1a1a" stroke-width=".8"/>
<path d="M39.4,88.4h2M39.4,91.6h2" stroke="#1a1a1a" stroke-width="1.4"/></g>
</svg></body></html>
